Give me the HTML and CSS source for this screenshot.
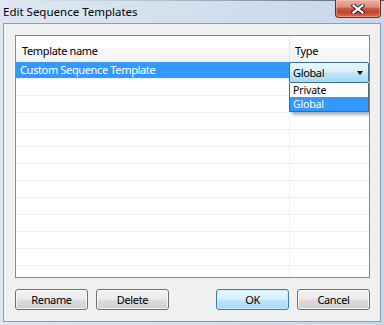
FILE: index.html
```html
<!DOCTYPE html>
<html>
<head>
<meta charset="utf-8">
<link rel="stylesheet" href="styles.css">
</head>
<body>
<div class="window">
  <div class="titlebar">
    <span class="title">Edit Sequence Templates</span>
    <div class="close">
      <svg width="14" height="10" viewBox="0 0 14 10">
        <path d="M2.5 1.5 L11.5 8.5 M11.5 1.5 L2.5 8.5" stroke="#3b2a2a" stroke-width="4.2" stroke-linecap="square" fill="none"/>
        <path d="M2.5 1.5 L11.5 8.5 M11.5 1.5 L2.5 8.5" stroke="#ffffff" stroke-width="2.2" stroke-linecap="square" fill="none"/>
      </svg>
    </div>
  </div>
  <div class="client">
    <div class="list">
      <div class="header">
        <div class="hcol hname">Template name</div>
        <div class="hcol htype">Type</div>
      </div>
      <div class="row selected"><div class="cell name">Custom Sequence Template</div><div class="cell type"></div></div>
      <div class="row"><div class="cell name"></div><div class="cell type"></div></div>
      <div class="row"><div class="cell name"></div><div class="cell type"></div></div>
      <div class="row"><div class="cell name"></div><div class="cell type"></div></div>
      <div class="row"><div class="cell name"></div><div class="cell type"></div></div>
      <div class="row"><div class="cell name"></div><div class="cell type"></div></div>
      <div class="row"><div class="cell name"></div><div class="cell type"></div></div>
      <div class="row"><div class="cell name"></div><div class="cell type"></div></div>
      <div class="row"><div class="cell name"></div><div class="cell type"></div></div>
      <div class="row"><div class="cell name"></div><div class="cell type"></div></div>
      <div class="row"><div class="cell name"></div><div class="cell type"></div></div>
      <div class="row"><div class="cell name"></div><div class="cell type"></div></div>
      <div class="row last"><div class="cell name"></div><div class="cell type"></div></div>

      <div class="combo">
        <span class="combo-text">Global</span>
        <span class="arrow"></span>
      </div>
      <div class="dropdown">
        <div class="opt">Private</div>
        <div class="opt sel">Global</div>
      </div>
    </div>
    <div class="buttons">
      <div class="group">
        <button class="btn">Rename</button>
        <button class="btn">Delete</button>
      </div>
      <div class="group">
        <button class="btn default">OK</button>
        <button class="btn">Cancel</button>
      </div>
    </div>
  </div>
</div>
</body>
</html>
```
FILE: styles.css
```css
* { box-sizing: border-box; }

html, body {
  margin: 0;
  padding: 0;
}

body {
  width: 384px;
  height: 325px;
  overflow: hidden;
  font-family: "Noto Sans", "Open Sans", sans-serif;
  font-size: 11px;
  letter-spacing: -0.35px;
  color: #000;
}

.window {
  width: 384px;
  height: 325px;
  display: flex;
  flex-direction: column;
  background: linear-gradient(to right, #dde7f3 0%, #d4e0ee 45%, #c7d7ea 100%);
}

.titlebar {
  height: 23px;
  display: flex;
  justify-content: space-between;
  align-items: flex-start;
  border-top: 1px solid transparent;
  border-image: linear-gradient(to right, #e2e9f1 0%, #b8c3cf 40%, #56616d 100%) 1;
}

.title {
  padding: 3px 0 0 3px;
  font-size: 11.5px;
  letter-spacing: 0;
  line-height: 16px;
  color: #000;
}

.close {
  width: 46px;
  height: 18px;
  margin-top: -1px;
  margin-right: 3px;
  border: 1px solid #6e2a1e;
  border-top: none;
  border-radius: 0 0 4px 4px;
  background: linear-gradient(to bottom, #ebb0a2 0%, #e0917d 40%, #c9503a 52%, #c34730 75%, #d66f55 100%);
  box-shadow: inset 0 0 0 1px rgba(255, 200, 190, 0.45);
  display: flex;
  align-items: center;
  justify-content: center;
}

.client {
  margin: 0 3px 3px 3px;
  flex: 1;
  border: 1px solid #909cab;
  background: #f0f0f0;
  padding: 11px 10px 11px 11px;
  display: flex;
  flex-direction: column;
}

.list {
  position: relative;
  height: 243px;
  border: 1px solid #828790;
  background: #fff;
  overflow: hidden;
}

.header {
  display: flex;
  height: 26px;
  background: linear-gradient(to bottom, #ffffff 0%, #ffffff 45%, #f7f8f9 46%, #f3f4f6 100%);
}

.hcol {
  line-height: 16px;
  padding-top: 7px;
}

.hname {
  width: 274px;
  padding-left: 6px;
  border-right: 1px solid #e5e5e5;
}

.htype {
  flex: 1;
  padding-left: 5px;
}

.row {
  display: flex;
  height: 17px;
  border-bottom: 1px solid #f0f0f0;
}

.cell {
  line-height: 16px;
}

.cell.name {
  width: 274px;
  padding-left: 4px;
  border-right: 1px solid #f0f0f0;
  white-space: nowrap;
}

.cell.type {
  flex: 1;
}

.row.selected .cell.name {
  background: #3399ff;
  color: #fff;
  border-right-color: #3399ff;
}

.combo {
  position: absolute;
  left: 273px;
  top: 26px;
  width: 80px;
  height: 21px;
  border: 1px solid #3c6f93;
  border-radius: 2px;
  background: linear-gradient(to bottom, #eaf6fd 0%, #d9f0fc 48%, #bee6fd 52%, #a7d9f5 100%);
  display: flex;
  align-items: center;
  justify-content: space-between;
  padding: 0 4px 0 3px;
}

.combo-text {
  line-height: 16px;
}

.arrow {
  width: 0;
  height: 0;
  border-left: 3.5px solid transparent;
  border-right: 3.5px solid transparent;
  border-top: 4px solid #000;
  margin-right: 1px;
}

.dropdown {
  position: absolute;
  left: 273px;
  top: 47px;
  width: 80px;
  height: 29px;
  border: 1px solid #646464;
  border-top: none;
  background: #fff;
  box-shadow: 3px 3px 3px rgba(0, 0, 0, 0.3);
  font-size: 10.5px;
  letter-spacing: -0.15px;
}

.opt {
  height: 14px;
  line-height: 14px;
  padding-left: 3px;
  overflow: hidden;
}

.opt.sel {
  background: #3399ff;
  color: #fff;
}

.buttons {
  margin-top: 11px;
  display: flex;
  justify-content: space-between;
}

.group {
  display: flex;
  gap: 8px;
}

.btn {
  width: 73px;
  height: 21px;
  margin: 0;
  padding: 0;
  border: 1px solid #707070;
  border-radius: 3px;
  background: linear-gradient(to bottom, #f2f2f2 0%, #ebebeb 48%, #dddddd 52%, #cfcfcf 100%);
  box-shadow: inset 0 0 0 1px rgba(255, 255, 255, 0.75);
  font-family: "Noto Sans", "Open Sans", sans-serif;
  font-size: 11px;
  letter-spacing: -0.35px;
  line-height: 16px;
  color: #000;
}

.btn.default {
  border-color: #3c7fb1;
  background: linear-gradient(to bottom, #eaf6fd 0%, #d9f0fc 48%, #bee6fd 52%, #a7d9f5 100%);
  box-shadow: inset 0 0 0 1px rgba(200, 235, 255, 0.9);
}
```
